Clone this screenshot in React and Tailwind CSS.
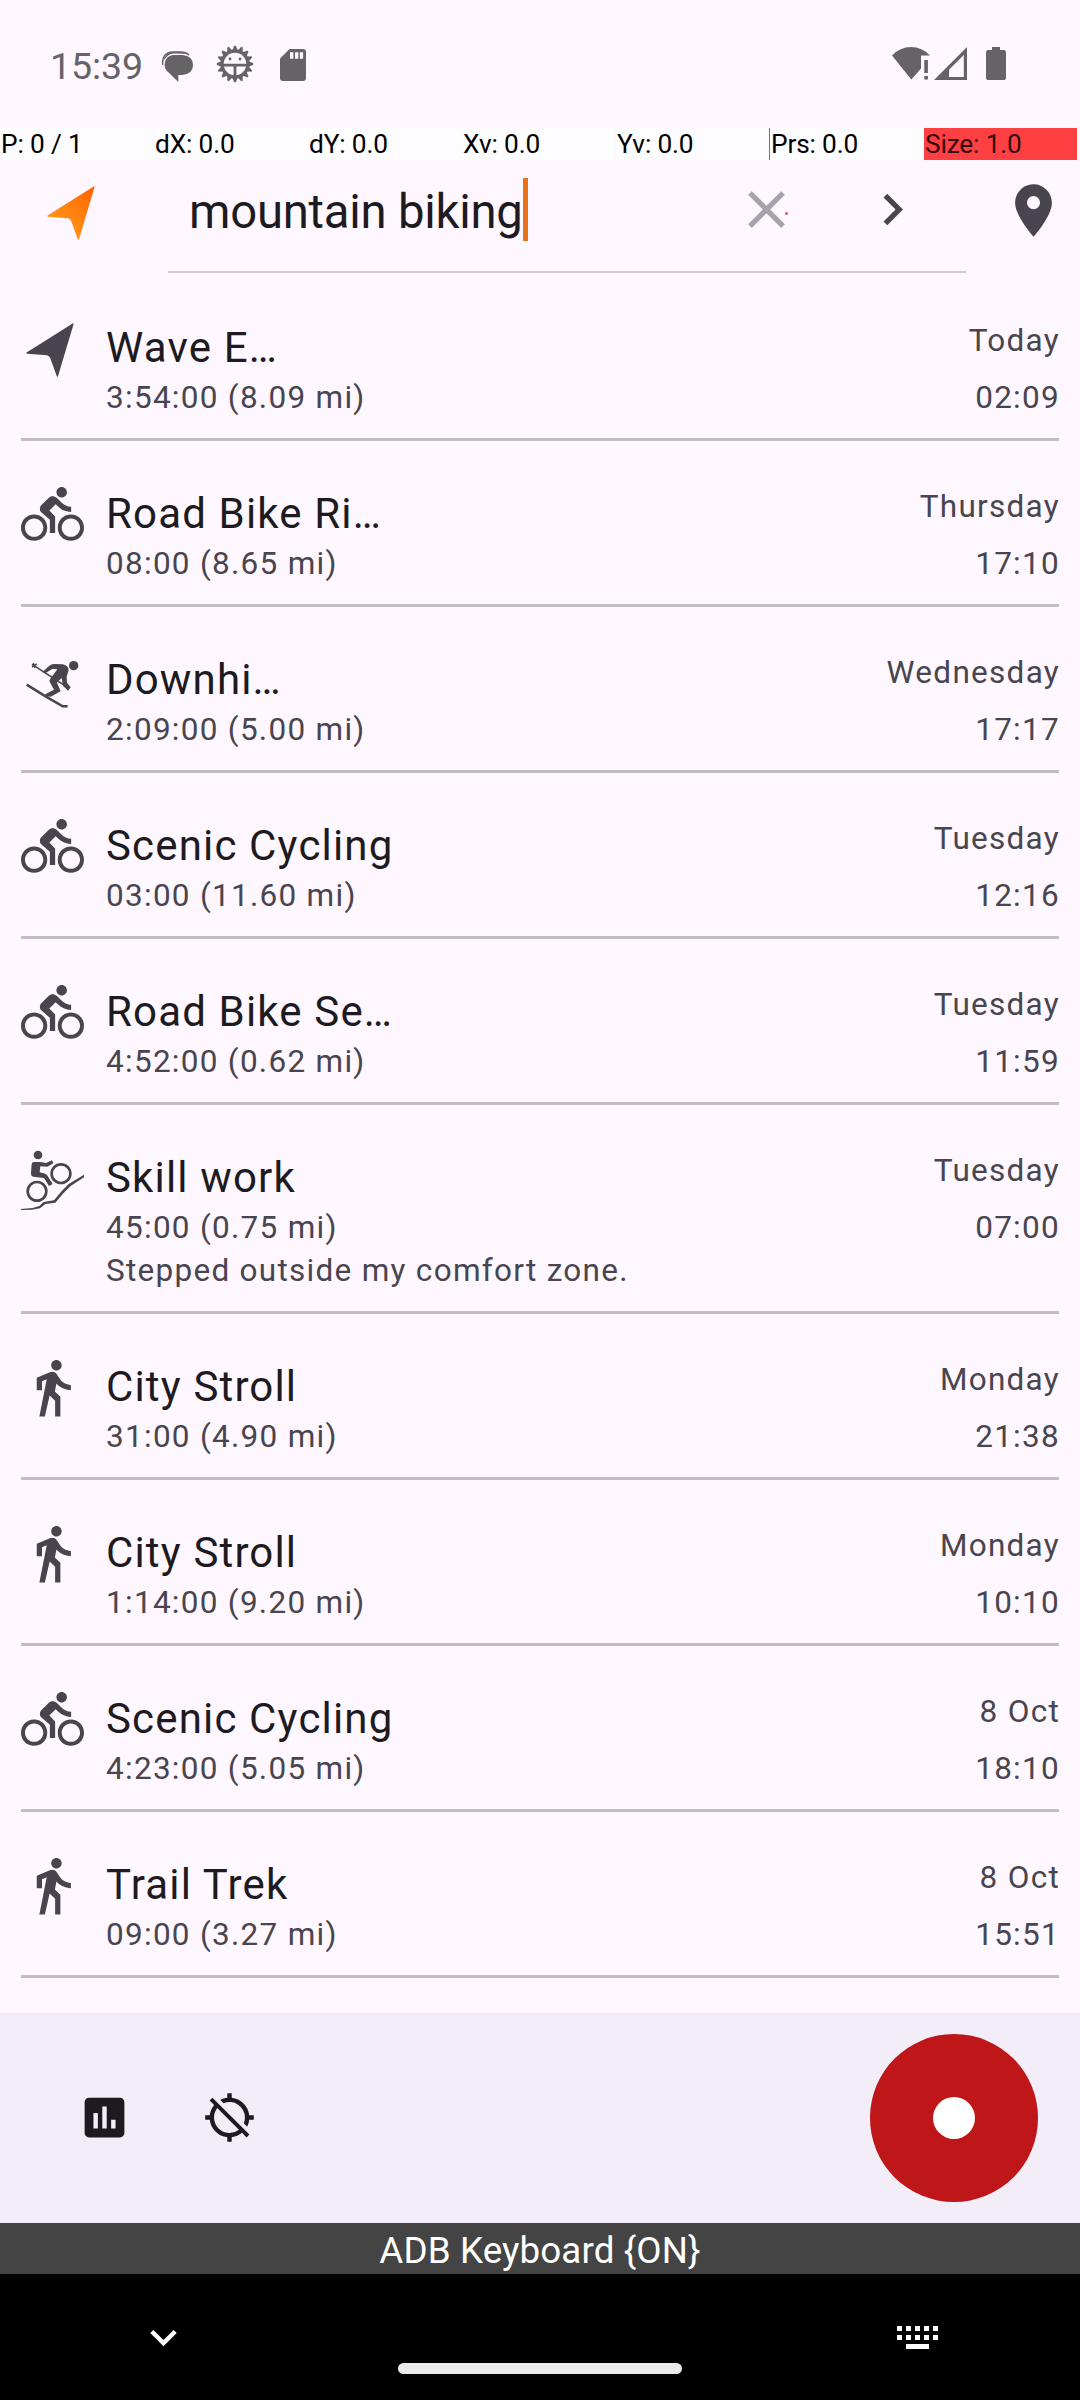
import React from "react";
import {
  MdDirectionsBike,
  MdDirectionsWalk,
  MdInsertChart,
  MdGpsOff,
  MdClose,
  MdChevronRight,
  MdPlace,
  MdKeyboardArrowDown,
} from "react-icons/md";

const rows = [
  { icon: "nav", title: "Wave E…", detail: "3:54:00 (8.09 mi)", day: "Today", time: "02:09" },
  { icon: "bike", title: "Road Bike Ri…", detail: "08:00 (8.65 mi)", day: "Thursday", time: "17:10" },
  { icon: "ski", title: "Downhi…", detail: "2:09:00 (5.00 mi)", day: "Wednesday", time: "17:17" },
  { icon: "bike", title: "Scenic Cycling", detail: "03:00 (11.60 mi)", day: "Tuesday", time: "12:16" },
  { icon: "bike", title: "Road Bike Se…", detail: "4:52:00 (0.62 mi)", day: "Tuesday", time: "11:59" },
  { icon: "mtb", title: "Skill work", detail: "45:00 (0.75 mi)", note: "Stepped outside my comfort zone.", day: "Tuesday", time: "07:00" },
  { icon: "walk", title: "City Stroll", detail: "31:00 (4.90 mi)", day: "Monday", time: "21:38" },
  { icon: "walk", title: "City Stroll", detail: "1:14:00 (9.20 mi)", day: "Monday", time: "10:10" },
  { icon: "bike", title: "Scenic Cycling", detail: "4:23:00 (5.05 mi)", day: "8 Oct", time: "18:10" },
  { icon: "walk", title: "Trail Trek", detail: "09:00 (3.27 mi)", day: "8 Oct", time: "15:51" },
];

const ARROW = "M52 6.3 L5.6 35.6 Q5 36.6 6 36.7 L26 38.2 Q28.4 38.6 29.2 41 L35.8 59.3 Q36.5 60.4 37 59.2 L52.6 7 Q52.7 6 52 6.3Z";

function ArrowIcon({ fill }) {
  return (
    <svg viewBox="0 0 63 63" className="size-[63px]">
      <defs>
        <linearGradient id="orange" x1="1" y1="0" x2="0.2" y2="1">
          <stop offset="0" stopColor="#ff6200" />
          <stop offset="1" stopColor="#ff9e1f" />
        </linearGradient>
      </defs>
      <path d={ARROW} fill={fill} />
    </svg>
  );
}

function SkiIcon() {
  return (
    <svg viewBox="33 -3 189 189" className="size-[63px]" fill="currentColor">
      <circle cx="191" cy="47" r="14" />
      <path d="M50 104 L108 140 L158 169 L173 169" fill="none" stroke="currentColor" strokeWidth="7.5" />
      <path d="M66 43 L176 114" fill="none" stroke="currentColor" strokeWidth="4.5" />
      <path d="M66 51 L80 42 M70 39 L75 54" fill="none" stroke="currentColor" strokeWidth="4.5" />
      <path d="M97 66 L118 47 Q124 42 132 42 L158 43 Q174 46 176 60 L170 80 L171 98 L182 112 L174 122 L159 107 L155 84 L141 97 L143 103 L152 124 L122 140 L104 138 L108 131 L132 119 L119 95 Q117 90 121 86 L142 58 L128 56 L106 70Z" />
    </svg>
  );
}

function MountainBikeIcon() {
  return (
    <svg viewBox="33 21 189 189" className="size-[63px]" fill="currentColor">
      <circle cx="84" cy="45" r="13" />
      <g fill="none" stroke="currentColor" strokeWidth="8">
        <circle cx="81" cy="154" r="28" />
        <circle cx="153" cy="101" r="28" />
      </g>
      <path d="M33 207 L68 204 L88 198 L101 186 L132 181 L156 152 L176 132 L222 104 L222 112 L182 138 L160 160 L136 188 L106 192 L90 205 L66 209.500 L33 210Z" />
      <path d="M70 66 L92 66 L108 69 L126 61 L130 70 L112 80 L91 79 L89 97 L106 101 L111 105 L128 132 L117 138 L102 114 L70 110 Q62 108 63 98 L65 72 Q66 67 70 66Z" />
    </svg>
  );
}

function ActivityIcon({ type }) {
  if (type === "nav") return <ArrowIcon fill="#49454e" />;
  if (type === "bike") return <MdDirectionsBike className="size-[63px]" />;
  if (type === "walk") return <MdDirectionsWalk className="size-[63px]" />;
  if (type === "ski") return <SkiIcon />;
  return <MountainBikeIcon />;
}

const gearPoints = Array.from({ length: 64 }, (_, i) => {
  const radius = i % 4 < 2 ? 18.2 : 14.8;
  const angle = ((i - 0.5) / 64) * Math.PI * 2 - Math.PI / 2;
  return `${(radius * Math.cos(angle)).toFixed(2)},${(radius * Math.sin(angle)).toFixed(2)}`;
}).join(" ");

function StatusBar() {
  return (
    <div className="flex h-32 justify-between pl-[50px] pr-[74px] text-[#666367]">
      <div className="flex pt-[45px]">
        <div className="w-[112px] whitespace-nowrap text-[37.500px] leading-[43px] tracking-[-0.050px]">15:39</div>
        <svg viewBox="0 0 31 31" className="mt-[5.500px] h-[31px] w-[31px]" fill="currentColor">
          <path d="M11 4 H20.500 Q31 5 31 14 Q31 23 20 24 H16.300 V31 L4.500 19.500 Q2.600 17.500 2.600 14 Q3 5 11 4Z" />
          <path d="M0.800 14 Q-0.500 1.600 11 1 H19 Q24.500 1.200 27 4.200" fill="none" stroke="currentColor" strokeWidth="1.400" />
          <path d="M1 11 Q3 1.500 11 1 H19 Q23.500 1.200 26 3.500 Q22 2.400 11 2.600 Q5 3.400 1 11Z" />
        </svg>
        <svg viewBox="-19 -19 38 38" className="ml-[23px] h-[38px] w-[38px]">
          <polygon points={gearPoints} fill="#666367" />
          <circle r="11.300" fill="#fef7ff" />
          <path d="M-12 1.200 H12 M0 1.200 V12" stroke="#666367" strokeWidth="2.800" />
          <circle cx="-5" cy="-5" r="1.400" fill="#666367" />
          <circle cx="5" cy="-5" r="1.400" fill="#666367" />
        </svg>
        <svg viewBox="0 0 26 32" className="ml-[26px] mt-[4px] h-[32px] w-[26px]">
          <path d="M9.500 0 H23 Q26 0 26 3 V29 Q26 32 23 32 H3 Q0 32 0 29 V9.500Z" fill="#666367" />
          <path d="M10 3.300h3.400v6.500h-3.400z M15 3.300h3.300v6.500h-3.300z M19.800 3.300h3.300v6.500h-3.300z" fill="#fef7ff" />
        </svg>
      </div>
      <div className="flex pt-[47px]">
        <svg viewBox="0 0 38 33" className="mr-[4px] h-[33px] w-[38px]" fill="currentColor">
          <path d="M0 8.500 Q8 0 19 0 Q30 0 38 8.500 H29 V21.500 L19.300 32.500Z" />
          <path d="M32.300 13h3.600v13h-3.600z M32.300 29h3.600v3.500h-3.600z" />
        </svg>
        <svg viewBox="0 0 33 33" className="mr-[19px] h-[33px] w-[33px]" fill="currentColor">
          <path fillRule="evenodd" d="M0 33 L33 0 V33Z M15 30 H29.800 V8 L15 22.800Z" />
        </svg>
        <svg viewBox="0 0 20 33" className="h-[33px] w-[20px]" fill="currentColor">
          <path d="M6 0 H14 V3 H18 Q20 3 20 5.500 V31 Q20 33 18 33 H2 Q0 33 0 31 V5.500 Q0 3 2 3 H6Z" />
        </svg>
      </div>
    </div>
  );
}

const cells = ["P: 0 / 1", "dX: 0.0", "dY: 0.0", "Xv: 0.0", "Yv: 0.0", "Prs: 0.0"];

export default function App() {
  return (
    <div className="flex h-[2400px] w-[1080px] flex-col overflow-hidden bg-[#fef7ff] font-['Roboto',sans-serif] text-[#1d1b20]">
      <StatusBar />

      <div className="grid h-8 grid-cols-7 grid-rows-[32px] gap-x-px pr-[3px] text-[26.250px] leading-[33px] tracking-[-0.150px] text-black">
        {cells.map((cell) => (
          <div
            key={cell}
            className={
              cell.startsWith("Prs")
                ? "-ml-px whitespace-nowrap border-l border-[#c05058] bg-[#fdfcfe] pl-px"
                : "whitespace-nowrap bg-[#fdfcfe] pl-px"
            }
          >
            {cell}
          </div>
        ))}
        <div className="whitespace-nowrap bg-[#ff4043] pl-px text-[#330b0d]">Size: 1.0</div>
      </div>

      <div className="flex h-[115px] text-[#49454e]">
        <div className="w-[168px] pl-[42px] pt-5">
          <ArrowIcon fill="url(#orange)" />
        </div>
        <div className="flex h-[113px] w-[798px] border-b-2 border-[#d2cbd4] pl-[21px]">
          <div className="flex w-[546px] pt-[18px] text-[47.250px] leading-[69px] tracking-[-0.230px] text-[#1d1b20]">
            <span className="whitespace-nowrap">mountain biking</span>
            <span className="h-[63px] w-[5px] bg-[#e97117]" />
          </div>
          <div className="relative mt-[18px] size-[63px]">
            <MdClose className="size-[63px] text-[#a8a2aa]" />
            <span className="absolute left-[50px] top-[34px] size-[3px] border border-[#ef8a90] bg-[#a81c30]" />
          </div>
          <MdChevronRight className="ml-[63px] mt-[18px] size-[63px]" />
        </div>
        <MdPlace className="ml-[35.500px] mt-[18.500px] size-[63px]" />
      </div>

      <div className="flex h-[1738px] flex-col px-[21px] text-[31.500px] leading-[37px] tracking-[1.280px] text-[#49454e]">
        {rows.map((row, i) => (
          <div
            key={i}
            className={
              row.note
                ? "flex h-[209px] border-b-[3px] border-[#c2bdc3]"
                : "flex h-[166px] border-b-[3px] border-[#c2bdc3]"
            }
          >
            <div className="w-[85px] pt-[42px]">
              <ActivityIcon type={row.icon} />
            </div>
            <div className="flex-1 pt-[48px]">
              <div className="text-[42px] leading-[50px] tracking-[1.160px] text-[#1d1b20]">{row.title}</div>
              <div className="mt-1.5">{row.detail}</div>
              {row.note && <div className="mt-1.5">{row.note}</div>}
            </div>
            <div className="-mr-px pt-[47px] text-right">
              <div>{row.day}</div>
              <div className="mt-5">{row.time}</div>
            </div>
          </div>
        ))}
      </div>

      <div className="flex h-[210px] items-center bg-[#f2edf7] pl-[78px] pr-[42px]">
        <MdInsertChart className="mb-px size-[53px]" />
        <MdGpsOff className="mb-px ml-[72px] size-[53px]" />
        <div className="ml-auto flex size-[168px] items-center justify-center rounded-full bg-[#be1619]">
          <div className="size-[42px] rounded-full bg-white" />
        </div>
      </div>

      <div className="h-[51px] bg-[#444444] text-center text-[36.750px] leading-[56px] tracking-[0.120px] text-white">
        ADB Keyboard {"{ON}"}
      </div>

      <div className="flex h-[126px] bg-black pl-[136.500px] text-white">
        <MdKeyboardArrowDown className="mt-[36.500px] size-[53px]" />
        <div className="ml-[208.500px] mt-[89px] h-[11px] w-[284px] rounded-full bg-[#eaeaea]" />
        <div className="ml-[215px] mt-[52px] flex w-[41px] flex-col items-center gap-[4px]">
          {[0, 1].map((line) => (
            <div key={line} className="flex w-full justify-between">
              {[0, 1, 2, 3, 4].map((k) => (
                <span key={k} className="size-[5px] bg-white" />
              ))}
            </div>
          ))}
          <span className="h-[5px] w-[23px] bg-white" />
        </div>
      </div>
    </div>
  );
}
